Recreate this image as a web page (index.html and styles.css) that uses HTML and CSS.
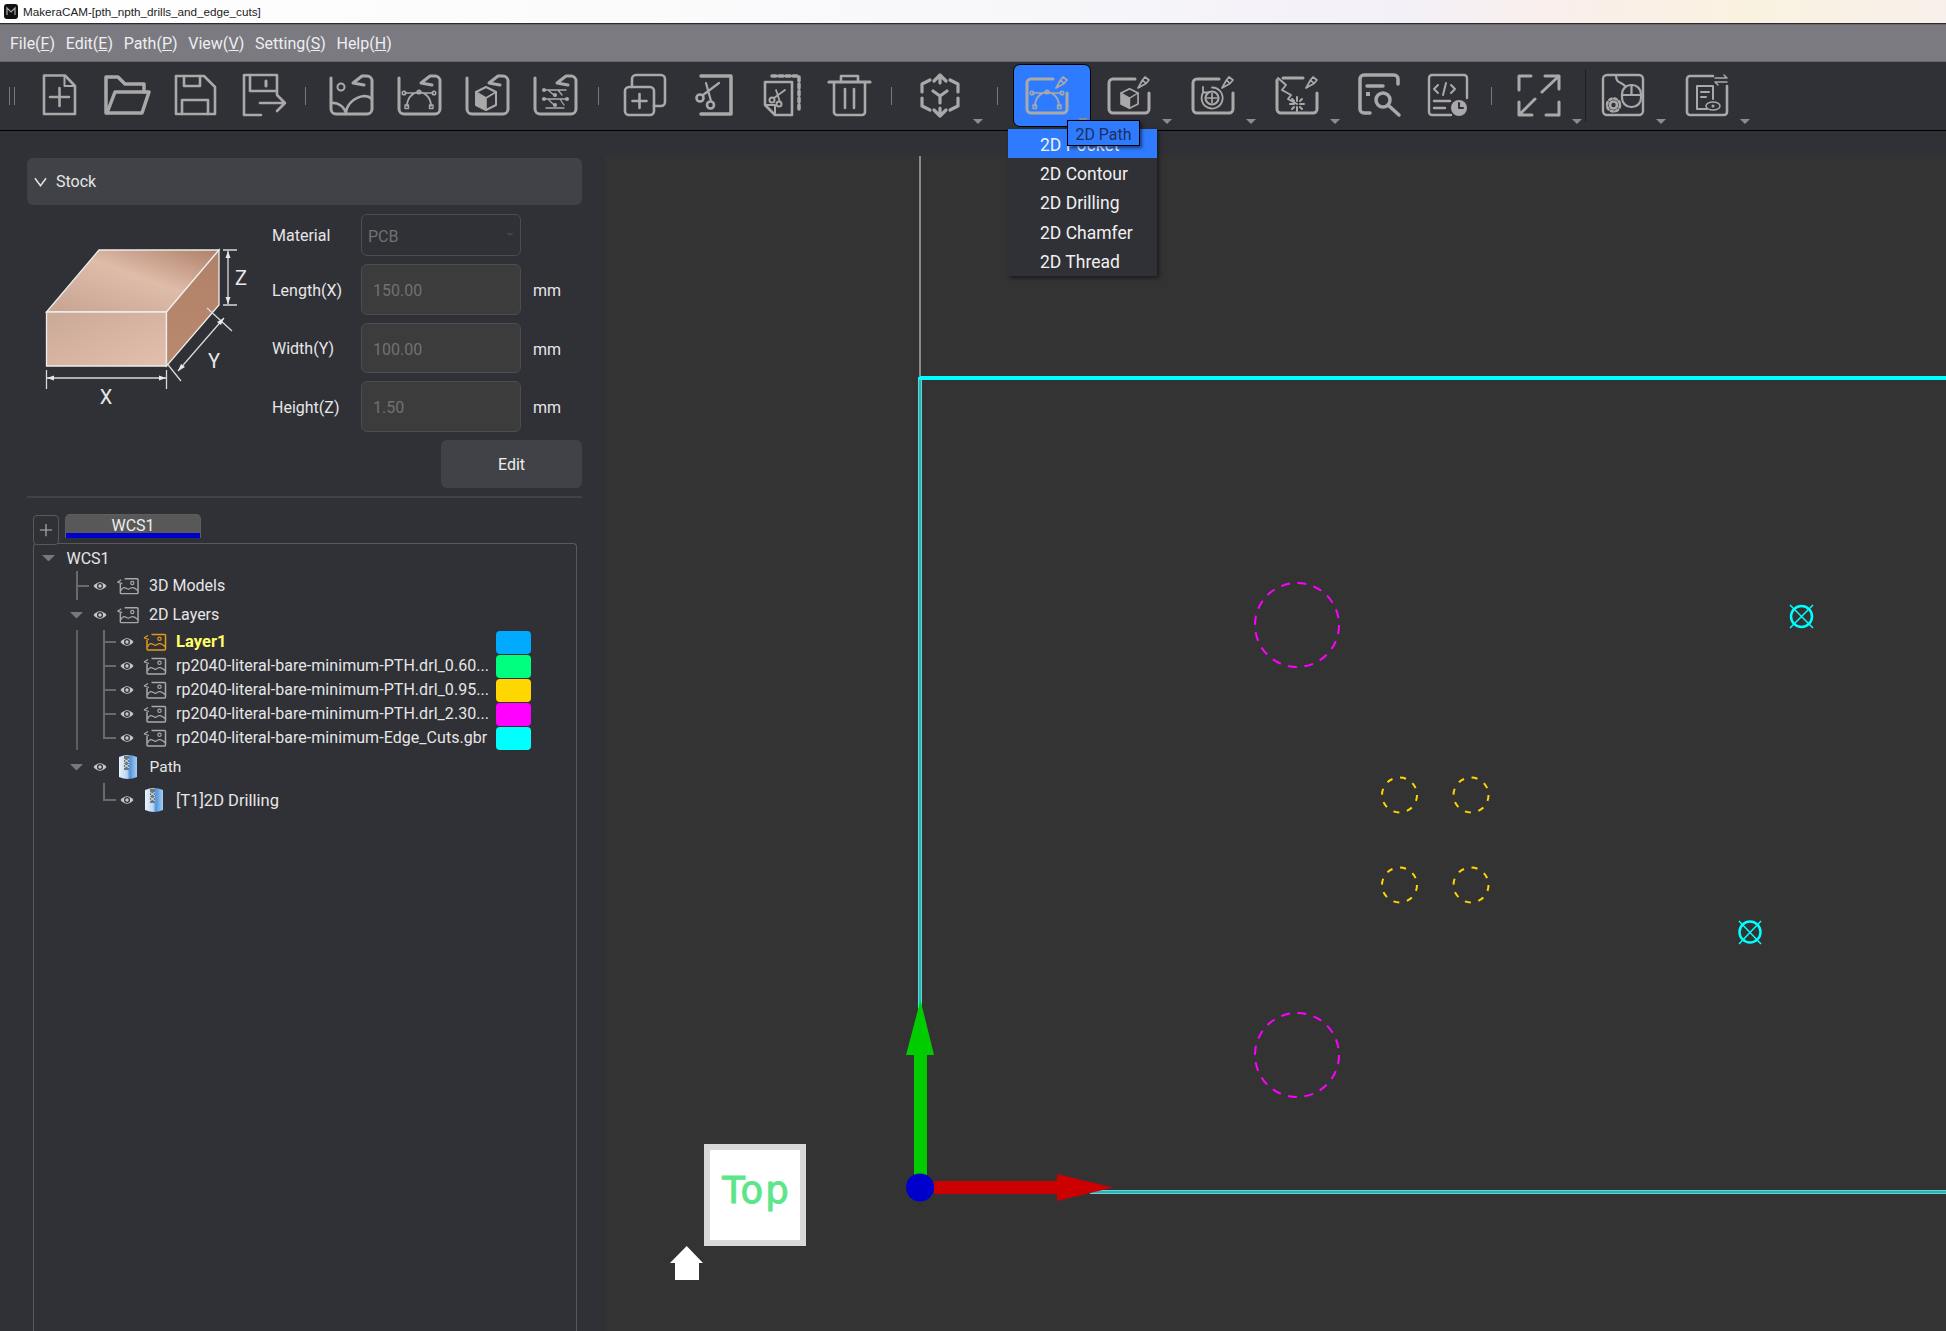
FILE: index.html
```html
<!DOCTYPE html>
<html lang="en">
<head>
<meta charset="utf-8">
<title>MakeraCAM</title>
<link rel="stylesheet" href="styles.css">
</head>
<body>
<svg class="defs" width="0" height="0" aria-hidden="true">
  <defs>
    <symbol id="bez" viewBox="0 0 48 48">
      <path d="M12 34C12 24 20 20 24 20C28 20 36 24 36 34M10 21H38" stroke-width="1.700"/>
      <circle cx="9" cy="21" r="1.800" stroke-width="1.500"/><circle cx="24" cy="20" r="1.800" stroke-width="1.500"/><circle cx="39" cy="21" r="1.800" stroke-width="1.500"/>
      <rect x="10" y="33" width="3.500" height="3.500" stroke-width="1.400"/><rect x="34.500" y="33" width="3.500" height="3.500" stroke-width="1.400"/>
    </symbol>
    <symbol id="cube" viewBox="0 0 48 48">
      <path d="M23 15L33 20V33L23 38L13 33V20Z" stroke-width="2"/>
      <path d="M13 21L23 26V38L13 33Z" class="solid"/>
      <path d="M13 20L23 26L33 20M23 26V38" stroke-width="1.600"/>
    </symbol>
    <symbol id="back" viewBox="0 0 48 48">
      <path d="M4 6V37a5 5 0 0 0 5 5H40a5 5 0 0 0 5-5V9a5 5 0 0 0-5-5H35L26 11L37 13" stroke-width="3"/>
    </symbol>
    <symbol id="pen" viewBox="0 0 48 48">
      <path d="M30 7H8a4 4 0 0 0-4 4V37a4 4 0 0 0 4 4H40a4 4 0 0 0 4-4V21" stroke-width="3"/>
      <path d="M37.500 8L40 5L44 8L41 11.500ZM33 16L37.500 8L41 11.500Z" stroke-width="1.700"/>
    </symbol>
    <symbol id="layer" viewBox="0 0 23 18">
      <path d="M8 1.500H21a1 1 0 0 1 1 1V16a1 1 0 0 1-1 1H4.500a1 1 0 0 1-1-1V7" stroke-width="1.500"/>
      <path d="M0.500 5L4.500 2.500M0.500 5L5.500 6.500" stroke-width="1.300"/>
      <path d="M4 14C7.500 6.500 10.500 14 13 12C15 10 17.500 9.500 22 14" stroke-width="1.300"/>
      <circle cx="16" cy="5.800" r="1.700" stroke-width="1.200"/>
    </symbol>
    <symbol id="eye" viewBox="0 0 14 10">
      <path d="M0.500 5Q7 -2.500 13.500 5Q7 12.500 0.500 5Z" class="eye-fill"/>
      <circle cx="7" cy="5" r="3" class="eye-ring"/>
      <circle cx="7" cy="5" r="1.700" class="eye-fill"/>
    </symbol>
    <linearGradient id="cylBody" x1="0" x2="1" y1="0" y2="0">
      <stop offset="0" stop-color="#e9f2fb"/><stop offset=".45" stop-color="#bcd6f2"/><stop offset=".6" stop-color="#4f94dc"/><stop offset="1" stop-color="#a9cdf2"/>
    </linearGradient>
    <symbol id="cyl" viewBox="0 0 20 26">
      <path d="M1 3Q10 -1 19 3V23Q10 27 1 23Z" fill="url(#cylBody)"/>
      <path d="M6 2V16H11V2Z" fill="#6d7780"/>
      <path d="M6 5L11 9M6 10L11 14M11 5L6 9M11 10L6 14" stroke="#d8dde2" stroke-width="1" fill="none"/>
    </symbol>
  </defs>
</svg>

<div class="app">
  <header class="titlebar">
    <svg class="applogo" viewBox="0 0 14 15"><rect width="14" height="15" rx="3"/><path d="M3 11V4L7 8L11 4V11"/></svg>
    <span class="apptitle">MakeraCAM-[pth_npth_drills_and_edge_cuts]</span>
  </header>

  <nav class="menubar">
    <span class="menu">File(<u>F</u>)</span>
    <span class="menu">Edit(<u>E</u>)</span>
    <span class="menu">Path(<u>P</u>)</span>
    <span class="menu">View(<u>V</u>)</span>
    <span class="menu">Setting(<u>S</u>)</span>
    <span class="menu">Help(<u>H</u>)</span>
  </nav>

  <div class="toolbar">
    <span class="grip"></span>
    <span class="tb s68"><svg class="ic" viewBox="0 0 48 48"><path d="M9 3.500H30L40 14V42H9Z"/><path d="M29.500 4V14H40" stroke-width="2"/><path d="M15 25H34M24.500 16V34"/></svg></span>
    <span class="tb s68"><svg class="ic" viewBox="0 0 48 48"><path d="M3 41V5H15L22 12H41V20" stroke-width="3.500"/><path d="M4 41L12 20H46L39 41Z" stroke-width="3.500"/></svg></span>
    <span class="tb s68"><svg class="ic" viewBox="0 0 48 48"><path d="M5 4H33L44 15V42H5Z"/><path d="M13 4V14H29V4M11 42V28H37V42"/></svg></span>
    <span class="tb s68"><svg class="ic" viewBox="0 0 48 48"><path d="M38 22V3H5V43H22"/><path d="M11 3V19H37"/><path d="M27 9V14" stroke-width="3"/><path d="M21 31H46M38 23L46 31L38 39"/></svg></span>
    <span class="sep sep-a"></span>
    <span class="tb s68"><svg class="ic" viewBox="0 0 48 48"><use href="#back"/><circle cx="14" cy="15" r="3.500" stroke-width="2"/><path d="M4 31C11 30 18 35 19 42M19 42C19 32 28 25 37 24C40 24 43 25 45 27"/></svg></span>
    <span class="tb s68"><svg class="ic" viewBox="0 0 48 48"><use href="#back"/><use href="#bez"/></svg></span>
    <span class="tb s68"><svg class="ic" viewBox="0 0 48 48"><use href="#back"/><use href="#cube"/></svg></span>
    <span class="tb s68"><svg class="ic" viewBox="0 0 48 48"><use href="#back"/><path d="M13 18H35M12 27H37M15 36H33M17 18L24 24M27 18L31 23M17 27L23 33M29 27L33 33" stroke-width="1.300"/><circle cx="13" cy="18" r="2" class="solid"/><circle cx="24" cy="23" r="2" class="solid"/><circle cx="13" cy="27" r="2" class="solid"/><circle cx="36" cy="27" r="2" class="solid"/><circle cx="24" cy="33" r="2" class="solid"/></svg></span>
    <span class="sep sep-b"></span>
    <span class="tb s68"><svg class="ic" viewBox="0 0 48 48"><rect x="4" y="15" width="29" height="28" rx="4"/><path d="M11 15V7a4 4 0 0 1 4-4H40a4 4 0 0 1 4 4V30a4 4 0 0 1-4 4H33"/><path d="M18.500 22V36M11.500 29H25.500"/></svg></span>
    <span class="tb s74"><svg class="ic" viewBox="0 0 48 48"><path d="M9 4H39V42H9" stroke-width="3.500"/><circle cx="8" cy="26" r="3.500"/><circle cx="18.500" cy="33" r="3.500"/><path d="M11 23L27 11M19 29L14 11" stroke-width="2.200"/></svg></span>
    <span class="tb s56"><svg class="ic" viewBox="0 0 48 48"><path d="M15 4H42V40" stroke-width="3.500" stroke-dasharray="4 3"/><path d="M8 10H35V43H18L8 33Z"/><path d="M8 33H18V43" stroke-width="2"/><circle cx="15" cy="28" r="2.500" stroke-width="2"/><circle cx="22" cy="32" r="2.500" stroke-width="2"/><path d="M17 26L28 18M23 30L19 18" stroke-width="1.800"/></svg></span>
    <span class="tb s80"><svg class="ic" viewBox="0 0 48 48"><path d="M4 10H45" stroke-width="3.200"/><path d="M16 10V4H33V10"/><path d="M9 11V40a3 3 0 0 0 3 3H37a3 3 0 0 0 3-3V11"/><path d="M20 17V36M29 17V36"/></svg></span>
    <span class="sep sep-c"></span>
    <span class="tb s95"><svg class="ic" viewBox="0 0 48 48"><path d="M24 3L18 9M24 3L30 9M24 3V11M24 44L18 38M24 44L30 38M24 44V36M6 12L14 8M6 12V20M42 12L34 8M42 12V20M6 34V26M6 34L14 38M42 34V26M42 34L34 38M24 24L17 19M24 24L31 19M24 24V31" stroke-width="3.200"/></svg><i class="drop"></i></span>
    <span class="sep sep-d"></span>
    <span class="tb active"><svg class="ic" viewBox="0 0 48 48"><use href="#pen"/><use href="#bez"/></svg><i class="drop drop-in"></i></span>
    <span class="tb s76"><svg class="ic" viewBox="0 0 48 48"><use href="#pen"/><use href="#cube" transform="translate(5 4) scale(.85)"/></svg><i class="drop"></i></span>
    <span class="tb s92"><svg class="ic" viewBox="0 0 48 48"><use href="#pen"/><circle cx="23" cy="26" r="6.500" stroke-width="2.200"/><path d="M23 21.500V30.500M18.500 26H27.500" stroke-width="1.700"/><path d="M14.500 20A10.500 10.500 0 1 0 23 15.500M14 15V20.500H19.500" stroke-width="1.800"/></svg><i class="drop"></i></span>
    <span class="tb s76"><svg class="ic" viewBox="0 0 48 48"><path d="M4 8V37a4 4 0 0 0 4 4H40a4 4 0 0 0 4-4V21M10 6H30" stroke-width="3"/><path d="M37.500 8L40 5L44 8L41 11.500ZM33 16L37.500 8L41 11.500Z" stroke-width="1.700"/><path d="M5 6L13 13L9 18L18 23L15 27L24 32M24 25V29M24 35V39M17 32H21M27 32H31M19 27L21 29M29 27L27 29M19 37L21 35M29 37L27 35" stroke-width="2"/></svg><i class="drop"></i></span>
    <span class="tb s90"><svg class="ic" viewBox="0 0 48 48"><path d="M14 41H8a4 4 0 0 1-4-4V7a4 4 0 0 1 4-4H38a4 4 0 0 1 4 4V12" stroke-width="3.500"/><path d="M11 14H27" stroke-width="3.500"/><rect x="10" y="20" width="4" height="4" class="solid"/><circle cx="27" cy="28" r="7" stroke-width="3.500"/><path d="M32 33L43 43" stroke-width="3.500"/></svg></span>
    <span class="tb s46"><svg class="ic" viewBox="0 0 48 48"><path d="M27 43H8a3 3 0 0 1-3-3V6a3 3 0 0 1 3-3H40a3 3 0 0 1 3 3V26" stroke-width="2.400"/><path d="M14 13L10 17L14 21M22 11L19 23M27 13L31 17L27 21" stroke-width="2"/><path d="M10 29H26M10 36H21" stroke-width="2.400"/><circle cx="35" cy="36" r="8" class="solid"/><path d="M35 31V36H39" class="cut" stroke-width="2"/></svg></span>
    <span class="sep sep-e"></span>
    <span class="tb s93"><svg class="ic" viewBox="0 0 48 48"><path d="M16 4H4V18M30 4H44V17M44 4L27 20M4 30V43H17M4 43L20 27M44 30V43H31" stroke-width="3"/></svg><i class="drop"></i></span>
    <span class="sep-dark"></span>
    <span class="tb s73"><svg class="ic" viewBox="0 0 48 48"><rect x="4" y="3" width="40" height="40" rx="4" stroke-width="2.400"/><rect x="23" y="13" width="19" height="22" rx="9" stroke-width="2.200"/><path d="M23 23H42M32.500 13V23M17 3C17 12 22 9 26 14" stroke-width="2.200"/><circle cx="14.500" cy="33" r="3.500" stroke-width="2.600"/><circle cx="14.500" cy="33" r="6.500" stroke-width="2.600" stroke-dasharray="2.500 2.600"/></svg><i class="drop"></i></span>
    <span class="tb s95"><svg class="ic" viewBox="0 0 48 48"><path d="M30 4H7a3 3 0 0 0-3 3V40a3 3 0 0 0 3 3H41a3 3 0 0 0 3-3V14" stroke-width="2.600"/><path d="M32 6H44L41 3M44 10H32L35 13" stroke-width="1.500"/><path d="M14 14H30V27M14 14V37H24" stroke-width="2"/><path d="M18 20H26M18 25H23" stroke-width="2"/><ellipse cx="30" cy="34" rx="7" ry="4" stroke-width="1.500"/><circle cx="30" cy="34" r="1.500" class="solid"/></svg><i class="drop"></i></span>
  </div>

  <main class="workspace">
    <aside class="panel">
      <div class="stock-head"><svg class="chev" viewBox="0 0 14 10"><path d="M1 1L7 9L13 1"/></svg><span>Stock</span></div>
      <div class="stock-body">
        <svg class="stock-pic" viewBox="27 214 245 200">
          <defs>
            <linearGradient id="topFace" x1="0" y1="1" x2="1" y2="0"><stop offset="0" stop-color="#c7a491"/><stop offset=".55" stop-color="#dfbcaa"/><stop offset="1" stop-color="#ae8068"/></linearGradient>
            <linearGradient id="frontFace" x1="0" y1="0" x2="1" y2="1"><stop offset="0" stop-color="#cba997"/><stop offset="1" stop-color="#e3bfad"/></linearGradient>
            <linearGradient id="sideFace" x1="0" y1="0" x2="0" y2="1"><stop offset="0" stop-color="#b08068"/><stop offset="1" stop-color="#b98a6e"/></linearGradient>
          </defs>
          <path d="M46.500 312L99 250H219L166.500 312Z" fill="url(#topFace)" class="edge"/>
          <path d="M46.500 312H166.500V366H46.500Z" fill="url(#frontFace)" class="edge"/>
          <path d="M166.500 312L219 250V305L166.500 366Z" fill="url(#sideFace)" class="edge"/>
          <path d="M223 250H237M223 305H237M228 251V304M46.500 370V389M166.500 370V389M47 378H166M178 371L224 318M165 361L181 381M207 308L232 331" class="dim"/>
          <path d="M228 251L225.500 258H230.500ZM228 304L225.500 297H230.500ZM47 378L54 375.500V380.500ZM166 378L159 375.500V380.500ZM178 371L181 364L185 367ZM224 318L217 322L221 325Z" class="arrowhead"/>
          <text x="241" y="285" class="dim-label">Z</text>
          <text x="106" y="404" class="dim-label">X</text>
          <text x="214" y="368" class="dim-label">Y</text>
        </svg>
        <div class="stock-form">
          <span class="lbl">Material</span><div class="field field-select">PCB<i class="caret"></i></div><span></span>
          <span class="lbl">Length(X)</span><div class="field">150.00</div><span class="unit">mm</span>
          <span class="lbl">Width(Y)</span><div class="field">100.00</div><span class="unit">mm</span>
          <span class="lbl">Height(Z)</span><div class="field">1.50</div><span class="unit">mm</span>
        </div>
      </div>
      <div class="edit-row"><button class="edit">Edit</button></div>
      <div class="divider"></div>
      <div class="tabs">
        <span class="addtab"><svg viewBox="0 0 16 16"><path d="M8 1V15M1 8H15"/></svg></span>
        <span class="tab">WCS1</span>
      </div>
      <div class="tree">
        <div class="row r27 lv0"><i class="twisty"></i><span class="name root">WCS1</span></div>
        <div class="row r29 lv1"><i class="branch"></i><svg class="eye"><use href="#eye"/></svg><svg class="lay lay1"><use href="#layer"/></svg><span class="name n1">3D Models</span></div>
        <div class="row r30 lv1"><i class="twisty tw1"></i><svg class="eye"><use href="#eye"/></svg><svg class="lay lay1"><use href="#layer"/></svg><span class="name n1 up">2D Layers</span></div>
        <div class="group">
          <div class="row r24 lv2"><i class="branch"></i><svg class="eye"><use href="#eye"/></svg><svg class="lay lay2 hot"><use href="#layer"/></svg><span class="name n2 cur">Layer1</span><i class="swatch c-blue"></i></div>
          <div class="row r24 lv2"><i class="branch"></i><svg class="eye"><use href="#eye"/></svg><svg class="lay lay2"><use href="#layer"/></svg><span class="name n2">rp2040-literal-bare-minimum-PTH.drl_0.60...</span><i class="swatch c-green"></i></div>
          <div class="row r24 lv2"><i class="branch"></i><svg class="eye"><use href="#eye"/></svg><svg class="lay lay2"><use href="#layer"/></svg><span class="name n2">rp2040-literal-bare-minimum-PTH.drl_0.95...</span><i class="swatch c-gold"></i></div>
          <div class="row r24 lv2"><i class="branch"></i><svg class="eye"><use href="#eye"/></svg><svg class="lay lay2"><use href="#layer"/></svg><span class="name n2">rp2040-literal-bare-minimum-PTH.drl_2.30...</span><i class="swatch c-pink"></i></div>
          <div class="row r24 lv2"><i class="branch last"></i><svg class="eye"><use href="#eye"/></svg><svg class="lay lay2"><use href="#layer"/></svg><span class="name n2">rp2040-literal-bare-minimum-Edge_Cuts.gbr</span><i class="swatch c-cyan"></i></div>
        </div>
        <div class="row r33 lv1"><i class="twisty tw1"></i><svg class="eye"><use href="#eye"/></svg><svg class="cyl cyl1"><use href="#cyl"/></svg><span class="name n1b">Path</span></div>
        <div class="row r34 lv2 lvp"><i class="branch last"></i><svg class="eye"><use href="#eye"/></svg><svg class="cyl cyl2"><use href="#cyl"/></svg><span class="name n2b">[T1]2D Drilling</span></div>
      </div>
    </aside>

    <section class="view">
      <div class="view-strip"></div>
      <svg class="canvas" viewBox="605 156 1341 1175">
        <path d="M920 156V1180" class="axis-grey"/>
        <path d="M920 377V1010" class="cy-v"/>
        <path d="M920 378H1946" class="cy-h"/>
        <path d="M1090 1192H1946" class="cy-b"/>
        <path d="M920 380V1010" class="grey-in"/>
        <path d="M1090 1192H1946" class="grey-in"/>
        <circle cx="1297" cy="625" r="42" class="mag"/>
        <circle cx="1297" cy="1055" r="42" class="mag"/>
        <circle cx="1399.500" cy="795" r="17.500" class="yel"/>
        <circle cx="1471" cy="795" r="17.500" class="yel"/>
        <circle cx="1399.500" cy="885" r="17.500" class="yel"/>
        <circle cx="1471" cy="885" r="17.500" class="yel"/>
        <g class="cyan-mark">
          <circle cx="1801.500" cy="616.500" r="10.500"/><path d="M1790 605L1813 628M1813 605L1790 628" class="thin"/>
          <circle cx="1750" cy="932" r="10.500"/><path d="M1739 921L1761 944M1761 921L1739 944" class="thin"/>
        </g>
        <path d="M914 1175V1055H906L920.500 1000L934 1055H927V1175Z" class="ax-g"/>
        <path d="M934 1181H1057V1174L1113 1187.500L1057 1201V1194H934Z" class="ax-r"/>
        <circle cx="920" cy="1187.500" r="14" class="ax-b"/>
        <rect x="707" y="1147" width="96" height="96" class="cube-face"/>
        <text x="756.500" y="1203" class="cube-text">Top</text>
        <path d="M686.700 1246L703 1263H699V1280H675V1263H670Z" class="home"/>
      </svg>
    </section>
  </main>

  <div class="popup">
    <div class="item sel">2D Pocket</div>
    <div class="item">2D Contour</div>
    <div class="item">2D Drilling</div>
    <div class="item">2D Chamfer</div>
    <div class="item">2D Thread</div>
  </div>
  <div class="tip">2D Path</div>
</div>
</body>
</html>
```
FILE: styles.css
```css
* { box-sizing: border-box; }
html, body { margin: 0; padding: 0; height: 100%; overflow: hidden; }
body { background: #303136; font-family: Roboto, "Liberation Sans", sans-serif; font-size: 16px; color: #e6e6e6; }
.defs { position: absolute; }
.app { position: relative; width: 1946px; height: 1331px; display: flex; flex-direction: column; overflow: hidden; }

.titlebar { height: 24px; flex: none; display: flex; align-items: center; padding: 0 0 0 4px; gap: 5px; border-bottom: 1px solid #2c2c30;
  background: linear-gradient(90deg, #ffffff 0, #f8f8fa 50%, #f3f0f8 72%, #faeee9 81%, #faf2e0 90%, #f7f0ea 100%); }
.applogo { width: 14px; height: 15px; flex: none; fill: #111; }
.applogo path { fill: none; stroke: #aaa; stroke-width: 1.200; }
.apptitle { font-family: "Liberation Sans", sans-serif; font-size: 11.700px; color: #222; }

.menubar { height: 38px; flex: none; display: flex; align-items: center; padding-left: 10px; gap: 10.700px; background: #7a7a80; border-top: 1px solid #66666b; border-bottom: 1px solid #66666b; }
.menu { font-size: 16px; color: #eeeef2; }

.toolbar { height: 69px; flex: none; display: flex; align-items: stretch; background: #303136; border-bottom: 1px solid #000; padding-left: 9px; }
.grip { width: 6px; height: 18px; align-self: center; border-left: 1px solid #77787c; border-right: 1px solid #77787c; margin-right: 10px; }
.tb { position: relative; display: flex; align-items: center; justify-content: center; flex: none; }
.s46 { width: 46px; } .s56 { width: 56px; } .s68 { width: 68px; } .s73 { width: 73px; } .s74 { width: 74px; } .s76 { width: 76px; }
.s80 { width: 80px; } .s90 { width: 90px; } .s92 { width: 92px; } .s93 { width: 93px; } .s95 { width: 95px; }
.ic { width: 48px; height: 48px; fill: none; stroke: #a9a9a9; stroke-width: 2.600; stroke-linejoin: round; stroke-linecap: round; overflow: visible; }
symbol { overflow: visible; }
.solid { fill: #a9a9a9; stroke: none; }
.cut { stroke: #303136; }
.sep { width: 1px; height: 18px; align-self: center; background: #77787c; flex: none; }
.sep-a { margin: 0 11px 0 8px; } .sep-b { margin: 0 12px 0 9px; } .sep-c { margin-left: 2px; }
.sep-d { margin: 0 15px 0 10px; } .sep-e { margin-left: 20px; }
.sep-dark { width: 1px; height: 53px; margin-top: 7px; background: #1d1d20; flex: none; }
.drop { position: absolute; left: calc(50% + 33px); bottom: 6px; width: 0; height: 0; border-left: 5px solid transparent; border-right: 5px solid transparent; border-top: 5px solid #8b8c90; }
.active { width: 78px; height: 63px; margin-top: 2px; background: #2e7bff; border: 1px solid #000; border-radius: 7px; }
.active .ic { margin-right: 10px; }
.drop-in { left: calc(50% + 26px); bottom: 3px; }

.workspace { flex: 1; display: flex; min-height: 0; }
.panel { width: 605px; flex: none; display: flex; flex-direction: column; padding: 27px 23px 0 27px; background: #303136; }
.stock-head { height: 47px; flex: none; display: flex; align-items: center; background: #414247; border-radius: 6px; padding-left: 7px; gap: 9px; font-size: 16px; color: #e6e6e6; }
.chev { width: 13px; height: 10px; fill: none; stroke: #e0e0e0; stroke-width: 1.700; }
.stock-body { display: flex; margin-top: 9px; }
.stock-pic { width: 245px; height: 200px; flex: none; overflow: visible; }
.edge { stroke: #ededed; stroke-width: 1.300; }
.dim { stroke: #d8d8d8; stroke-width: 1.300; fill: none; }
.arrowhead { fill: #e8e8e8; }
.dim-label { fill: #e8e8e8; font-size: 20px; text-anchor: middle; font-family: Roboto, sans-serif; }
.stock-form { display: grid; grid-template-columns: 89px 160px auto; grid-template-rows: 42px 51px 50px 51px; row-gap: 8px; align-items: center; }
.lbl { font-size: 16px; color: #e6e6e6; padding-top: 1px; }
.unit { font-size: 16px; color: #e6e6e6; margin-left: 12px; padding-top: 2px; }
.field { height: 100%; display: flex; align-items: center; padding: 2px 0 0 11px; background: #3c3c3c; border: 1px solid #4c4d50; border-radius: 6px; color: #717171; font-size: 16px; }
.field-select { background: #303136; padding-left: 6px; position: relative; }
.caret { position: absolute; right: 6px; top: 18px; border-left: 4px solid transparent; border-right: 4px solid transparent; border-top: 3px solid #3d4550; }
.edit-row { display: flex; justify-content: flex-end; margin-top: 8px; }
.edit { width: 141px; height: 48px; padding-top: 2px; background: #414247; border: 0; border-radius: 6px; color: #eee; font: 16px Roboto, sans-serif; }
.divider { height: 2px; margin-top: 8px; background: #414247; flex: none; }

.tabs { height: 29px; margin: 16px 0 0 6px; display: flex; gap: 6px; flex: none; align-items: flex-start; position: relative; z-index: 1; }
.addtab { width: 26px; height: 30px; margin-top: 1px; border: 1px solid #58595d; border-radius: 4px; background: #303136; display: flex; align-items: center; justify-content: center; }
.addtab svg { width: 14px; height: 14px; fill: none; stroke: #b5b5b5; stroke-width: 1.300; }
.tab { width: 136px; height: 24px; border-radius: 5px 5px 0 0; background: linear-gradient(#585858, #585858 78%, #0000cc 78%); border: 1px solid #5e5e5e; border-bottom: 0; text-align: center; font-size: 16px; line-height: 21px; color: #eee; }

.tree { flex: 1; margin-left: 6px; width: 544px; border: 1px solid #58595d; border-bottom: 0; border-radius: 4px 4px 0 0; }
.row { display: flex; align-items: center; }
.r24 { height: 24px; } .r27 { height: 27px; } .r29 { height: 29px; } .r30 { height: 30px; } .r33 { height: 33px; } .r34 { height: 34px; }
.name { font-size: 16px; color: #e6e6e6; white-space: nowrap; }
.lv0 { padding-left: 8px; }
.root { margin-left: 11.500px; padding-top: 1px; }
.lv1 { padding-left: 42px; }
.lv2 { padding-left: 25px; }
.lvp { padding-left: 69px; }
.twisty { width: 13px; height: 0; flex: none; border-left: 6.500px solid transparent; border-right: 6.500px solid transparent; border-top: 6px solid #77787c; }
.tw1 { margin-left: -6px; margin-right: 10px; }
.branch { width: 13px; height: 100%; flex: none; margin-right: 4px;
  background: linear-gradient(#6a6a6a, #6a6a6a) left top / 2px 100% no-repeat, linear-gradient(#6a6a6a, #6a6a6a) left center / 100% 2px no-repeat; }
.branch.last { background: linear-gradient(#6a6a6a, #6a6a6a) left top / 2px 50% no-repeat, linear-gradient(#6a6a6a, #6a6a6a) left center / 100% 2px no-repeat; }
.eye { width: 14px; height: 10px; flex: none; }
.eye-fill { fill: #c8c8c8; }
.eye-ring { fill: #303136; }
.lay { fill: none; stroke: #a9a9a9; flex: none; }
.lay1 { width: 22px; height: 18px; margin-left: 10px; }
.lay2 { width: 24px; height: 18px; margin-left: 9px; }
.hot { stroke: #e59a1c; }
.n1 { margin-left: 10px; }
.up { margin-top: -2px; }
.n2 { margin: -2px 0 0 9px; letter-spacing: .05px; }
.cur { color: #ffff66; font-weight: 700; font-size: 16.500px; }
.group { margin-left: 42px; border-left: 2px solid #5e5e5e; }
.swatch { width: 35px; height: 23px; flex: none; border-radius: 4px; margin-left: auto; margin-right: 45px; }
.c-blue { background: #00aaff; } .c-green { background: #00ff7f; } .c-gold { background: #ffd700; } .c-pink { background: #ff00ff; } .c-cyan { background: #00ffff; }
.cyl { flex: none; }
.cyl1 { width: 20px; height: 26px; margin-left: 11px; }
.cyl2 { width: 20px; height: 26px; margin-left: 10px; }
.n1b { margin-left: 11.500px; font-size: 15.500px; }
.n2b { margin-left: 12px; font-size: 16.500px; }

.view { flex: 1; display: flex; flex-direction: column; min-width: 0; }
.view-strip { height: 25px; flex: none; background: #303136; }
.canvas { flex: 1; display: block; width: 1341px; height: 1175px; background: #333333; }
.axis-grey { stroke: #8a8a8a; stroke-width: 2; fill: none; }
.cy-v { stroke: #00ffff; stroke-width: 4; fill: none; }
.cy-h { stroke: #00ffff; stroke-width: 4; fill: none; }
.cy-b { stroke: #00ffff; stroke-width: 4; fill: none; }
.grey-in { stroke: #8a8a8a; stroke-width: 2; fill: none; }
.mag { fill: none; stroke: #ff00ff; stroke-width: 2; stroke-dasharray: 9 7.500; }
.yel { fill: none; stroke: #ffd700; stroke-width: 2; stroke-dasharray: 6 7.750; }
.cyan-mark { fill: none; stroke: #00ffff; stroke-width: 2.500; }
.thin { stroke-width: 1.500; }
.ax-g { fill: #00cc00; } .ax-r { fill: #cc0000; } .ax-b { fill: #0000cc; }
.cube-face { fill: #fff; stroke: #d8d8d8; stroke-width: 6; }
.cube-text { fill: #5de58a; font-family: "DejaVu Sans", sans-serif; font-size: 37px; letter-spacing: 2px; stroke: #5de58a; stroke-width: 1px; text-anchor: middle; }
.home { fill: #fff; }

.popup { position: absolute; left: 1008px; top: 129px; width: 149px; height: 147px; background: #303136; box-shadow: 2px 2px 4px rgba(0,0,0,.5); z-index: 2; }
.item { height: 29.200px; line-height: 32px; padding-left: 32px; font-size: 17.500px; color: #f0f0f0; }
.sel { background: #2e7bff; }
.tip { position: absolute; left: 1067px; top: 120px; width: 73px; height: 26px; background: #2e7bff; border: 1px solid #000; box-shadow: 2px 2px 3px rgba(0,0,0,.5); color: #1d2f5c; font-size: 16px; line-height: 27px; text-align: center; z-index: 3; }
```
